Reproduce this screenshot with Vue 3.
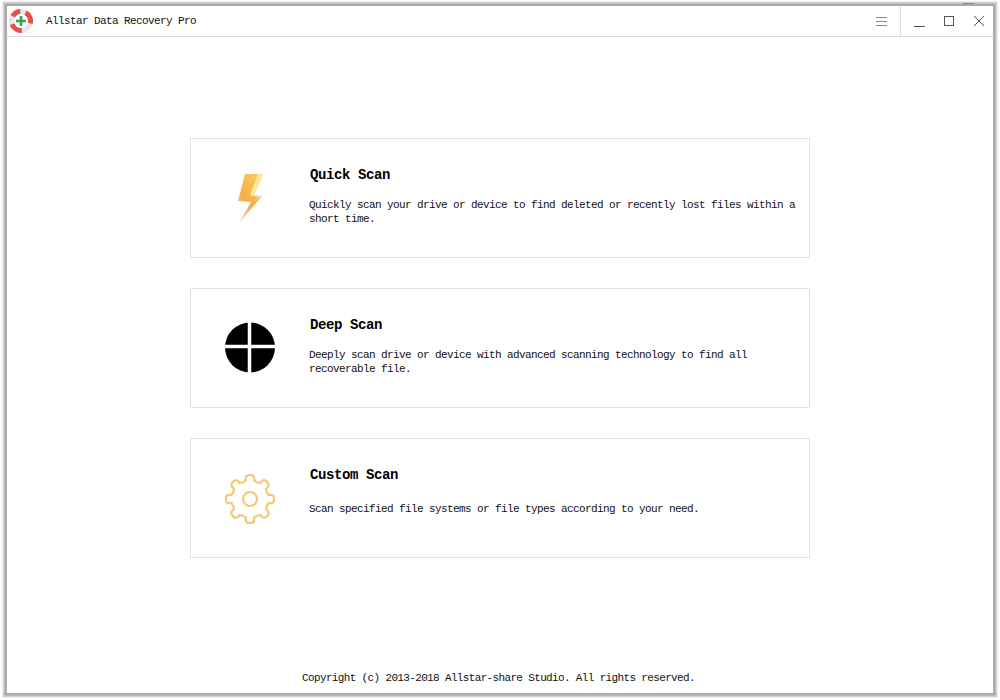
<template>
  <div class="screen">
    <div class="window">
      <span class="frame-mark"></span>
      <header class="titlebar">
        <svg class="logo" width="26" height="26" viewBox="-13 -13 26 26">
          <circle r="9.5" fill="none" stroke="#e6e6e6" stroke-width="5" />
          <path v-for="seg in logoSegments" :key="seg" :d="seg" fill="#e2504c" />
          <path d="M0 -5V5M-5 0H5" stroke="#27a84a" stroke-width="2.500" />
        </svg>
        <span class="app-name">Allstar Data Recovery Pro</span>
        <div class="controls">
          <button class="ctl menu">
            <svg width="11" height="10" viewBox="0 0 11 10"><path d="M0 1.5H11M0 5.5H11M0 9.5H11" stroke="#888" /></svg>
          </button>
          <button class="ctl">
            <svg width="12" height="12" viewBox="0 0 12 12"><path d="M1 11.5H12" stroke="#555" /></svg>
          </button>
          <button class="ctl">
            <svg width="12" height="12" viewBox="0 0 12 12"><rect x="1.5" y="1.5" width="9" height="9" fill="none" stroke="#555" /></svg>
          </button>
          <button class="ctl">
            <svg width="12" height="12" viewBox="0 0 12 12"><path d="M1 1L11 11M11 1L1 11" stroke="#555" /></svg>
          </button>
        </div>
      </header>

      <main class="content">
        <section class="card" v-for="scan in scans" :key="scan.title">
          <div class="card-icon">
            <svg v-if="scan.icon === 'bolt'" width="27" height="51" viewBox="0 0 27 51">
              <defs>
                <linearGradient id="bolt" x1="0.75" y1="0" x2="0.15" y2="1">
                  <stop offset="0" stop-color="#fbcb5c" />
                  <stop offset="0.55" stop-color="#f6ad48" />
                  <stop offset="1" stop-color="#f7c9a0" />
                </linearGradient>
              </defs>
              <path d="M8 1H26L17 22L25 23L2 50L14 29L1 28Z" fill="url(#bolt)" />
              <path d="M21 1H26L17 22L25 23L18 27L21.500 24L13 22.500Z" fill="#fde6a0" />
            </svg>
            <svg v-else-if="scan.icon === 'disc'" class="disc" width="50" height="51" viewBox="0 0 50 51">
              <circle cx="25" cy="25.500" r="25" fill="#000" />
              <path d="M24.500 0V51M0 24.500H50" stroke="#fff" stroke-width="3.500" />
            </svg>
            <svg v-else class="gear" width="50" height="50" viewBox="-25 -25 50 50">
              <path :d="gearPath" fill="none" stroke="#f6c873" stroke-width="2.200" stroke-linejoin="round" />
              <circle r="7" fill="none" stroke="#f6c873" stroke-width="2.200" />
            </svg>
          </div>
          <div class="card-text">
            <h2 class="card-title">{{ scan.title }}</h2>
            <p class="card-desc" :class="{ single: scan.icon === 'gear' }">{{ scan.desc }}</p>
          </div>
        </section>
      </main>

      <footer class="copyright">Copyright (c) 2013-2018 Allstar-share Studio. All rights reserved.</footer>
    </div>
  </div>
</template>

<script setup>
const scans = [
  {
    icon: 'bolt',
    title: 'Quick Scan',
    desc: 'Quickly scan your drive or device to find deleted or recently lost files within a short time.',
  },
  {
    icon: 'disc',
    title: 'Deep Scan',
    desc: 'Deeply scan drive or device with advanced scanning technology to find all recoverable file.',
  },
  {
    icon: 'gear',
    title: 'Custom Scan',
    desc: 'Scan specified file systems or file types according to your need.',
  },
]

function polar(r, deg) {
  const t = ((deg - 90) * Math.PI) / 180
  return `${(r * Math.cos(t)).toFixed(2)} ${(r * Math.sin(t)).toFixed(2)}`
}

// red parts of the lifebuoy, angles clockwise from 12 o'clock
const logoSegments = [
  [300, 355],
  [29, 104],
  [175, 250],
].map(([a, b]) => `M${polar(12, a)} A12 12 0 0 1 ${polar(12, b)} L${polar(7, b)} A7 7 0 0 0 ${polar(7, a)} Z`)

// eight rounded teeth
function gear() {
  const pts = []
  const step = 360 / 16
  for (let i = 0; i < 8; i++) {
    const a = i * 45
    pts.push(`${i === 0 ? 'M' : 'L'}${polar(19, a - step * 0.55)}`)
    pts.push(`Q${polar(24, a - step * 0.5)} ${polar(24, a - step * 0.2)}`)
    pts.push(`Q${polar(24.500, a)} ${polar(24, a + step * 0.2)}`)
    pts.push(`Q${polar(24, a + step * 0.5)} ${polar(19, a + step * 0.55)}`)
    pts.push(`Q${polar(17.500, a + step)} ${polar(19, a + step * 1.45)}`)
  }
  return pts.join(' ') + ' Z'
}
const gearPath = gear()
</script>

<style>
html, body { margin: 0; background: #fff; }
</style>

<style scoped>
.screen {
  width: 1000px;
  height: 700px;
  padding: 6px 7px 7px;
  box-sizing: border-box;
  overflow: hidden;
}

.window {
  position: relative;
  width: 986px;
  height: 687px;
  display: flex;
  flex-direction: column;
  background: #fff;
  box-shadow: 0 0 0 2px #ababab, 0 0 0 3px #bdbdbd, 0 0 0 4px #d4d4d4, 0 0 0 5px #ececec;
  font-family: 'Liberation Mono', monospace;
  color: #111;
}

.frame-mark {
  position: absolute;
  top: -3px;
  left: 956px;
  width: 11px;
  height: 1px;
  background: #888;
}

.titlebar {
  height: 30px;
  flex: none;
  display: flex;
  align-items: center;
  border-bottom: 1px solid #dcdcdc;
  padding-left: 1px;
}

.logo { flex: none; }

.app-name {
  margin-left: 12px;
  font-size: 11px;
  letter-spacing: -0.6px;
}

.controls {
  margin-left: auto;
  display: flex;
  height: 100%;
}

.ctl {
  width: 30px;
  padding: 0 0 0 2px;
  border: none;
  background: none;
  display: flex;
  align-items: center;
  justify-content: center;
}

.ctl.menu {
  width: 44px;
  padding: 0 0 0 5px;
  border-right: 1px solid #dcdcdc;
  margin-right: 2px;
}

.content {
  flex: 1;
  display: flex;
  flex-direction: column;
  align-items: center;
  gap: 30px;
  padding-top: 101px;
}

.card {
  width: 620px;
  height: 120px;
  box-sizing: border-box;
  display: flex;
  border: 1px solid #e2e2e2;
}

.card-icon {
  width: 118px;
  flex: none;
  display: flex;
  align-items: center;
  justify-content: center;
}

.disc { margin-top: -1px; }
.gear { margin-top: 1px; }

.card-text { padding-top: 29px; padding-right: 10px; }

.card-title {
  margin: 0 0 16px;
  padding-left: 1px;
  font-size: 14px;
  line-height: 14px;
  letter-spacing: -0.4px;
  font-weight: 700;
  color: #000;
}

.card-desc {
  margin: 0;
  font-size: 11px;
  line-height: 14px;
  letter-spacing: -0.6px;
}

.card-desc.single { margin-top: 20px; }

.copyright {
  flex: none;
  text-align: center;
  font-size: 11px;
  line-height: 14px;
  letter-spacing: -0.65px;
  padding: 0 3px 8px 0;
}
</style>
